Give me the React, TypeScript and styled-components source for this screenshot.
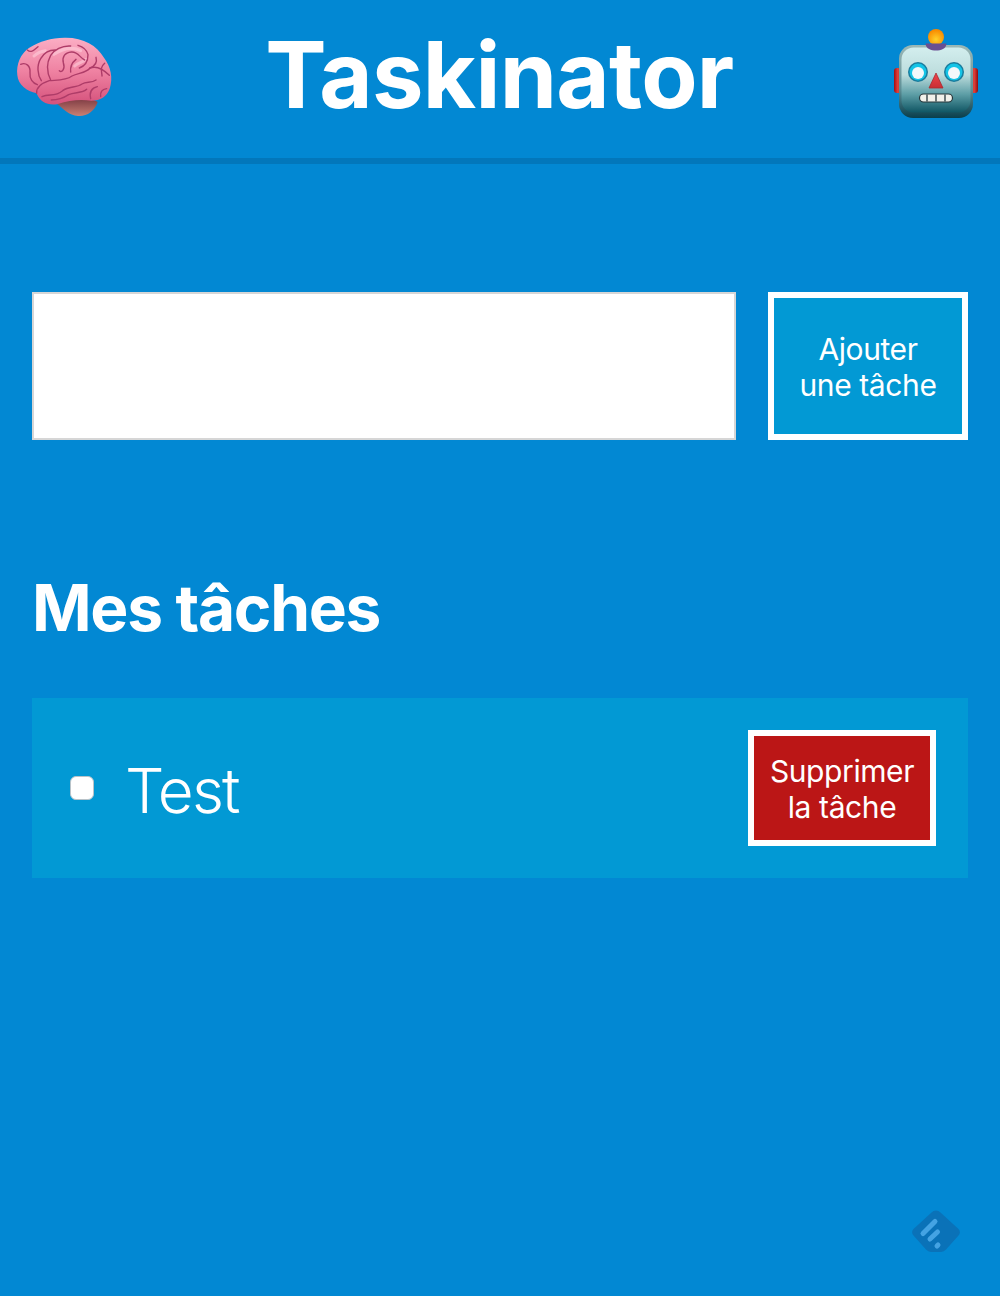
import { ReactElement } from 'react';
import styled, { createGlobalStyle } from 'styled-components';

const GlobalStyle = createGlobalStyle`
  html, body {
    background-color: #0288d3;
    margin: 0;
    padding: 0;
  }
`;

const Page = styled.div`
  box-sizing: border-box;
  color: #fff;
  font-family: Inter, "Liberation Sans", sans-serif;
  min-height: 1296px;
  position: relative;
`;

const Header = styled.header`
  align-items: center;
  border-bottom: 6px solid #0277bb;
  box-sizing: border-box;
  display: flex;
  height: 164px;
  justify-content: space-between;
  padding: 0 20px 8px 14px;
`;

const Title = styled.h1`
  font-size: 92px;
  font-weight: 700;
  letter-spacing: -0.7px;
  line-height: 1;
  margin: 0 7px 0 0;
`;

const BrainIcon = styled.svg`
  display: block;
  height: 82px;
  margin-top: 4px;
  width: 100px;
`;

const RobotIcon = styled.svg`
  display: block;
  height: 94px;
  margin-bottom: 4px;
  width: 88px;
`;

const Main = styled.main`
  padding: 128px 32px 0;
`;

const TaskForm = styled.form`
  display: flex;
  gap: 32px;
`;

const TaskInput = styled.input`
  background: #fff;
  border: 2px solid #d6d6d6;
  box-sizing: border-box;
  flex: 1;
  height: 148px;
`;

const ActionButton = styled.button<{ $danger?: boolean; $width: number; $height: number }>`
  background-color: ${({ $danger }) => ($danger ? '#bb1616' : '#0299d4')};
  border: 6px solid #fff;
  box-sizing: border-box;
  color: #fff;
  flex: none;
  font-family: inherit;
  font-size: 30px;
  height: ${({ $height }) => $height}px;
  letter-spacing: -0.4px;
  line-height: 36px;
  padding: 2px 0 0;
  width: ${({ $width }) => $width}px;
`;

const SectionTitle = styled.h2`
  font-size: 64px;
  font-weight: 700;
  letter-spacing: -1.300px;
  line-height: 76px;
  margin: 130px 0 52px;
`;

const TaskItem = styled.div`
  align-items: center;
  background-color: #0299d4;
  box-sizing: border-box;
  display: flex;
  height: 180px;
  padding: 0 32px 0 38px;
`;

const TaskCheck = styled.input`
  appearance: none;
  background: #fff;
  border: 1px solid #b9c3c9;
  border-radius: 6px;
  box-sizing: border-box;
  height: 24px;
  margin: 0 31px 0 0;
  width: 24px;
`;

const TaskLabel = styled.span`
  flex: 1;
  font-size: 62px;
  font-weight: 350;
  letter-spacing: -1.800px;
  line-height: 76px;
  padding-top: 6px;
`;

const FeedlyIcon = styled.svg`
  bottom: 42px;
  height: 44px;
  position: absolute;
  right: 39px;
  width: 50px;
`;

function Brain(): ReactElement {
  return (
    <BrainIcon viewBox="40 80 300 246" aria-hidden="true">
      <defs>
        <linearGradient id="brainFill" x1="0" y1="0" x2="0" y2="1">
          <stop offset="0" stopColor="#fbaec4" />
          <stop offset="0.5" stopColor="#ef82a2" />
          <stop offset="1" stopColor="#d5527c" />
        </linearGradient>
        <linearGradient id="stemFill" x1="0" y1="0" x2="0" y2="1">
          <stop offset="0" stopColor="#7c3a42" />
          <stop offset="1" stopColor="#c98074" />
        </linearGradient>
      </defs>
      <path
        d="M165 280 C195 262 265 262 291 278 C282 306 258 322 232 320 C205 318 188 298 165 280 Z"
        fill="url(#stemFill)"
      />
      <path
        d="M50 198 C46 165 60 132 86 115 C118 95 150 86 192 85 C248 84 288 108 310 145 C330 172 338 205 327 238 C318 262 300 274 272 274 C240 270 205 272 172 284 C145 290 118 280 108 252 C78 246 52 226 50 198 Z"
        fill="url(#brainFill)"
      />
      <g fill="none" stroke="#ffd3df" strokeWidth="9" strokeLinecap="round" opacity="0.55">
        <path d="M160 135 C185 118 215 112 240 124" />
        <path d="M100 140 C110 130 122 126 134 124" />
        <path d="M222 170 C232 160 244 160 256 150" />
      </g>
      <g fill="none" stroke="#ae3c68" strokeWidth="4.200" strokeLinecap="round" strokeLinejoin="round">
        <path d="M108 252 C106 232 122 222 146 214 C172 212 196 214 214 200 C232 190 256 192 268 176 C284 170 306 178 326 198" />
        <path d="M122 214 C110 196 108 168 120 148 C130 130 146 122 164 122" />
        <path d="M60 165 C76 158 90 170 88 190 C86 208 96 222 110 226" />
        <path d="M80 122 C92 132 100 122 112 112" />
        <path d="M150 212 C138 188 138 160 150 138 C160 122 184 108 210 110" />
        <path d="M176 184 C184 192 194 178 188 160 C184 142 192 130 212 128 C232 126 238 146 252 152" />
        <path d="M210 188 C208 172 216 158 226 150 M236 176 C252 170 262 156 262 136 C258 120 246 112 232 108" />
        <path d="M286 144 C290 158 282 170 268 176 M304 200 C304 186 296 176 312 162" />
        <path d="M124 262 C146 252 162 264 186 244 C204 230 228 236 244 224 C258 216 272 222 286 212" />
        <path d="M152 272 C172 272 186 268 204 256 C222 248 246 252 258 240 M270 268 C266 250 272 236 290 232 M300 262 C298 248 306 240 318 238" />
      </g>
    </BrainIcon>
  );
}

function Robot(): ReactElement {
  return (
    <RobotIcon viewBox="892 26 88 94" aria-hidden="true">
      <defs>
        <linearGradient id="headFill" x1="0" y1="0" x2="0" y2="1">
          <stop offset="0" stopColor="#d3eeee" />
          <stop offset="0.42" stopColor="#bcdcdc" />
          <stop offset="0.72" stopColor="#5d9ea6" />
          <stop offset="1" stopColor="#0f5563" />
        </linearGradient>
        <linearGradient id="headEdge" x1="0" y1="0" x2="0" y2="1">
          <stop offset="0" stopColor="#9cb8b6" />
          <stop offset="0.6" stopColor="#5f9097" />
          <stop offset="1" stopColor="#093f4d" />
        </linearGradient>
        <linearGradient id="earFill" x1="0" y1="0" x2="1" y2="0">
          <stop offset="0" stopColor="#a50b10" />
          <stop offset="0.5" stopColor="#e4443e" />
          <stop offset="1" stopColor="#8e0a0e" />
        </linearGradient>
        <radialGradient id="ballFill" cx="0.5" cy="0.65" r="0.6">
          <stop offset="0" stopColor="#ffd02a" />
          <stop offset="1" stopColor="#f88a00" />
        </radialGradient>
        <linearGradient id="noseFill" x1="0" y1="0" x2="0" y2="1">
          <stop offset="0" stopColor="#f0444a" />
          <stop offset="1" stopColor="#c82f34" />
        </linearGradient>
      </defs>
      <rect x="894" y="68" width="8" height="25" rx="3" fill="url(#earFill)" />
      <rect x="970" y="68" width="8" height="25" rx="3" fill="url(#earFill)" />
      <circle cx="936" cy="37" r="8" fill="url(#ballFill)" />
      <rect x="899" y="45" width="74" height="73" rx="14" fill="url(#headEdge)" />
      <rect x="901.500" y="47.500" width="69" height="65" rx="12" fill="url(#headFill)" />
      <path d="M925.500 43.500 H946.500 C946 49 941 50.500 936 50.500 C931 50.500 926 49 925.500 43.500 Z" fill="#6a4f91" />
      <circle cx="918" cy="72" r="10" fill="#1a7c9d" />
      <circle cx="918" cy="72" r="8.500" fill="#14c4e6" />
      <circle cx="918" cy="73" r="6" fill="#f3f8fa" />
      <circle cx="954" cy="72" r="10" fill="#1a7c9d" />
      <circle cx="954" cy="72" r="8.500" fill="#14c4e6" />
      <circle cx="954" cy="73" r="6" fill="#f3f8fa" />
      <path d="M936 73 L943 88 H929 Z" fill="url(#noseFill)" stroke="#a9282e" strokeWidth="0.8" strokeLinejoin="round" />
      <rect x="919.500" y="94" width="33" height="8" rx="4" fill="#f1f1ea" stroke="#26363b" strokeWidth="1.200" />
      <path d="M927 94.500 V101.500 M936 94.500 V101.500 M945 94.500 V101.500" stroke="#26363b" strokeWidth="1.300" />
    </RobotIcon>
  );
}

function Feedly(): ReactElement {
  return (
    <FeedlyIcon viewBox="0 0 50 44" aria-hidden="true">
      <path
        d="M20.500 2.500 a6 6 0 0 1 9 0 L47.500 19 a4.500 4.500 0 0 1 0 6.500 L35 39.500 a8 8 0 0 1 -5 2.500 H20 a8 8 0 0 1 -5 -2.500 L2.500 25.500 a4.500 4.500 0 0 1 0 -6.500 Z"
        fill="#0a72b8"
      />
      <g stroke="#44a3e3" strokeWidth="5" strokeLinecap="round">
        <path d="M12 23.500 L24 11.500" />
        <path d="M19 29 L26.500 22" />
        <path d="M26 36 L27 35" />
      </g>
    </FeedlyIcon>
  );
}

export default function App(): ReactElement {
  return (
    <Page>
      <GlobalStyle />
      <Header>
        <Brain />
        <Title>Taskinator</Title>
        <Robot />
      </Header>
      <Main>
        <TaskForm>
          <TaskInput type="text" />
          <ActionButton type="button" $width={200} $height={148}>
            Ajouter
            <br />
            une tâche
          </ActionButton>
        </TaskForm>
        <SectionTitle>Mes tâches</SectionTitle>
        <TaskItem>
          <TaskCheck type="checkbox" />
          <TaskLabel>Test</TaskLabel>
          <ActionButton type="button" $danger $width={188} $height={116}>
            Supprimer
            <br />
            la tâche
          </ActionButton>
        </TaskItem>
      </Main>
      <Feedly />
    </Page>
  );
}
